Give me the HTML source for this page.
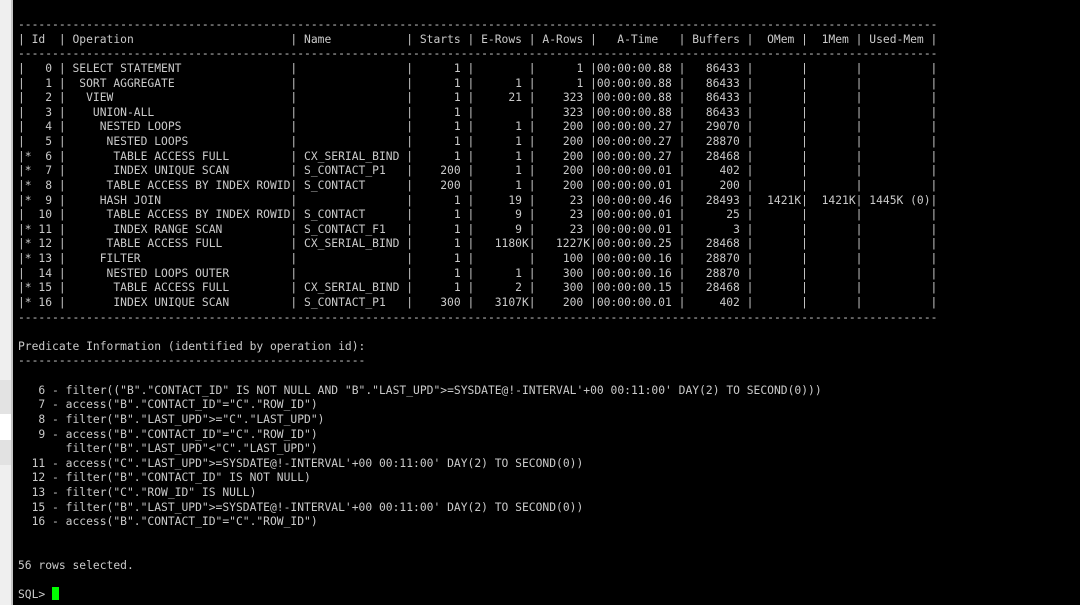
<!DOCTYPE html>
<html><head><meta charset="utf-8"><style>
html,body{margin:0;padding:0;background:#000;width:1080px;height:605px;overflow:hidden}
.strip{position:absolute;left:0;top:0;width:11px;height:605px;background:#efefef}
.bd{position:absolute;left:11px;top:0;width:2px;height:605px;background:#c4c4c4}
.s1{position:absolute;left:0;top:380px;width:11px;height:34px;background:#e3e3e3}
.s2{position:absolute;left:0;top:414px;width:11px;height:26px;background:#fff}
.s3{position:absolute;left:0;top:440px;width:11px;height:25px;background:#e2e2e2}
.t{position:absolute;left:18px;top:17px;font-family:"DejaVu Sans Mono","Liberation Mono",monospace;font-size:11.32px;line-height:14.625px;color:#cacaca;white-space:pre}
.r{display:flex;height:14.625px}
.r i{font-style:normal;display:block;flex:none;overflow:hidden}
.r b{font-weight:normal;display:inline-block;text-align:right;width:7ch}
.a{width:6ch}.b{width:34ch}.c{width:17ch}.d{width:9ch}.g{width:13ch}.h{width:10ch}.h b{width:8ch}.e{width:8ch}.k{width:11ch}
.l{height:14.625px}
.cur{display:inline-block;width:7px;height:13px;background:#00ff00;vertical-align:-2px}
</style></head><body>
<div class="strip"></div><div class="s1"></div><div class="s2"></div><div class="s3"></div><div class="bd"></div>
<div class="t"><div class="l">---------------------------------------------------------------------------------------------------------------------------------------</div><div class="r"><i class="a">| Id  </i><i class="b">| Operation</i><i class="c">| Name</i><i class="d">| Starts </i><i class="d">| E-Rows </i><i class="d">| A-Rows </i><i class="g">|   A-Time   </i><i class="h">| Buffers </i><i class="e">|  OMem </i><i class="e">|  1Mem </i><i class="k">| Used-Mem </i>|</div><div class="l">---------------------------------------------------------------------------------------------------------------------------------------</div><div class="r"><i class="a">|   0 </i><i class="b">| SELECT STATEMENT</i><i class="c">|</i><i class="d">|<b>1</b></i><i class="d">|</i><i class="d">|<b>1</b></i><i class="g">|00:00:00.88 </i><i class="h">|<b>86433</b></i><i class="e">|</i><i class="e">|</i><i class="k">|</i>|</div><div class="r"><i class="a">|   1 </i><i class="b">|  SORT AGGREGATE</i><i class="c">|</i><i class="d">|<b>1</b></i><i class="d">|<b>1</b></i><i class="d">|<b>1</b></i><i class="g">|00:00:00.88 </i><i class="h">|<b>86433</b></i><i class="e">|</i><i class="e">|</i><i class="k">|</i>|</div><div class="r"><i class="a">|   2 </i><i class="b">|   VIEW</i><i class="c">|</i><i class="d">|<b>1</b></i><i class="d">|<b>21</b></i><i class="d">|<b>323</b></i><i class="g">|00:00:00.88 </i><i class="h">|<b>86433</b></i><i class="e">|</i><i class="e">|</i><i class="k">|</i>|</div><div class="r"><i class="a">|   3 </i><i class="b">|    UNION-ALL</i><i class="c">|</i><i class="d">|<b>1</b></i><i class="d">|</i><i class="d">|<b>323</b></i><i class="g">|00:00:00.88 </i><i class="h">|<b>86433</b></i><i class="e">|</i><i class="e">|</i><i class="k">|</i>|</div><div class="r"><i class="a">|   4 </i><i class="b">|     NESTED LOOPS</i><i class="c">|</i><i class="d">|<b>1</b></i><i class="d">|<b>1</b></i><i class="d">|<b>200</b></i><i class="g">|00:00:00.27 </i><i class="h">|<b>29070</b></i><i class="e">|</i><i class="e">|</i><i class="k">|</i>|</div><div class="r"><i class="a">|   5 </i><i class="b">|      NESTED LOOPS</i><i class="c">|</i><i class="d">|<b>1</b></i><i class="d">|<b>1</b></i><i class="d">|<b>200</b></i><i class="g">|00:00:00.27 </i><i class="h">|<b>28870</b></i><i class="e">|</i><i class="e">|</i><i class="k">|</i>|</div><div class="r"><i class="a">|*  6 </i><i class="b">|       TABLE ACCESS FULL</i><i class="c">| CX_SERIAL_BIND</i><i class="d">|<b>1</b></i><i class="d">|<b>1</b></i><i class="d">|<b>200</b></i><i class="g">|00:00:00.27 </i><i class="h">|<b>28468</b></i><i class="e">|</i><i class="e">|</i><i class="k">|</i>|</div><div class="r"><i class="a">|*  7 </i><i class="b">|       INDEX UNIQUE SCAN</i><i class="c">| S_CONTACT_P1</i><i class="d">|<b>200</b></i><i class="d">|<b>1</b></i><i class="d">|<b>200</b></i><i class="g">|00:00:00.01 </i><i class="h">|<b>402</b></i><i class="e">|</i><i class="e">|</i><i class="k">|</i>|</div><div class="r"><i class="a">|*  8 </i><i class="b">|      TABLE ACCESS BY INDEX ROWID</i><i class="c">| S_CONTACT</i><i class="d">|<b>200</b></i><i class="d">|<b>1</b></i><i class="d">|<b>200</b></i><i class="g">|00:00:00.01 </i><i class="h">|<b>200</b></i><i class="e">|</i><i class="e">|</i><i class="k">|</i>|</div><div class="r"><i class="a">|*  9 </i><i class="b">|     HASH JOIN</i><i class="c">|</i><i class="d">|<b>1</b></i><i class="d">|<b>19</b></i><i class="d">|<b>23</b></i><i class="g">|00:00:00.46 </i><i class="h">|<b>28493</b></i><i class="e">|  1421K</i><i class="e">|  1421K</i><i class="k">| 1445K (0)</i>|</div><div class="r"><i class="a">|  10 </i><i class="b">|      TABLE ACCESS BY INDEX ROWID</i><i class="c">| S_CONTACT</i><i class="d">|<b>1</b></i><i class="d">|<b>9</b></i><i class="d">|<b>23</b></i><i class="g">|00:00:00.01 </i><i class="h">|<b>25</b></i><i class="e">|</i><i class="e">|</i><i class="k">|</i>|</div><div class="r"><i class="a">|* 11 </i><i class="b">|       INDEX RANGE SCAN</i><i class="c">| S_CONTACT_F1</i><i class="d">|<b>1</b></i><i class="d">|<b>9</b></i><i class="d">|<b>23</b></i><i class="g">|00:00:00.01 </i><i class="h">|<b>3</b></i><i class="e">|</i><i class="e">|</i><i class="k">|</i>|</div><div class="r"><i class="a">|* 12 </i><i class="b">|      TABLE ACCESS FULL</i><i class="c">| CX_SERIAL_BIND</i><i class="d">|<b>1</b></i><i class="d">|<b>1180</b>K</i><i class="d">|<b>1227</b>K</i><i class="g">|00:00:00.25 </i><i class="h">|<b>28468</b></i><i class="e">|</i><i class="e">|</i><i class="k">|</i>|</div><div class="r"><i class="a">|* 13 </i><i class="b">|     FILTER</i><i class="c">|</i><i class="d">|<b>1</b></i><i class="d">|</i><i class="d">|<b>100</b></i><i class="g">|00:00:00.16 </i><i class="h">|<b>28870</b></i><i class="e">|</i><i class="e">|</i><i class="k">|</i>|</div><div class="r"><i class="a">|  14 </i><i class="b">|      NESTED LOOPS OUTER</i><i class="c">|</i><i class="d">|<b>1</b></i><i class="d">|<b>1</b></i><i class="d">|<b>300</b></i><i class="g">|00:00:00.16 </i><i class="h">|<b>28870</b></i><i class="e">|</i><i class="e">|</i><i class="k">|</i>|</div><div class="r"><i class="a">|* 15 </i><i class="b">|       TABLE ACCESS FULL</i><i class="c">| CX_SERIAL_BIND</i><i class="d">|<b>1</b></i><i class="d">|<b>2</b></i><i class="d">|<b>300</b></i><i class="g">|00:00:00.15 </i><i class="h">|<b>28468</b></i><i class="e">|</i><i class="e">|</i><i class="k">|</i>|</div><div class="r"><i class="a">|* 16 </i><i class="b">|       INDEX UNIQUE SCAN</i><i class="c">| S_CONTACT_P1</i><i class="d">|<b>300</b></i><i class="d">|<b>3107</b>K</i><i class="d">|<b>200</b></i><i class="g">|00:00:00.01 </i><i class="h">|<b>402</b></i><i class="e">|</i><i class="e">|</i><i class="k">|</i>|</div><div class="l">---------------------------------------------------------------------------------------------------------------------------------------</div><div class="l"> </div><div class="l">Predicate Information (identified by operation id):</div><div class="l">---------------------------------------------------</div><div class="l"> </div><div class="l">   6 - filter(("B"."CONTACT_ID" IS NOT NULL AND "B"."LAST_UPD"&gt;=SYSDATE@!-INTERVAL'+00 00:11:00' DAY(2) TO SECOND(0)))</div><div class="l">   7 - access("B"."CONTACT_ID"="C"."ROW_ID")</div><div class="l">   8 - filter("B"."LAST_UPD"&gt;="C"."LAST_UPD")</div><div class="l">   9 - access("B"."CONTACT_ID"="C"."ROW_ID")</div><div class="l">       filter("B"."LAST_UPD"&lt;"C"."LAST_UPD")</div><div class="l">  11 - access("C"."LAST_UPD"&gt;=SYSDATE@!-INTERVAL'+00 00:11:00' DAY(2) TO SECOND(0))</div><div class="l">  12 - filter("B"."CONTACT_ID" IS NOT NULL)</div><div class="l">  13 - filter("C"."ROW_ID" IS NULL)</div><div class="l">  15 - filter("B"."LAST_UPD"&gt;=SYSDATE@!-INTERVAL'+00 00:11:00' DAY(2) TO SECOND(0))</div><div class="l">  16 - access("B"."CONTACT_ID"="C"."ROW_ID")</div><div class="l"> </div><div class="l"> </div><div class="l">56 rows selected.</div><div class="l"> </div><div class="l">SQL&gt; <span class="cur"></span></div></div>
</body></html>
